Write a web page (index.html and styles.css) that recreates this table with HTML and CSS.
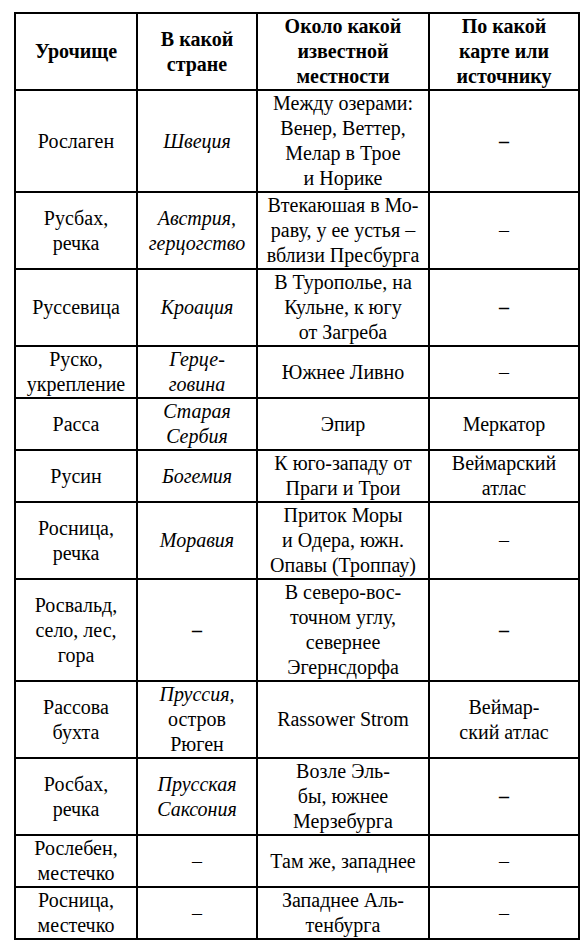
FILE: index.html
```html
<!DOCTYPE html>
<html lang="ru">
<head>
<meta charset="utf-8">
<title>Урочища</title>
<link rel="stylesheet" href="styles.css">
</head>
<body>
<table class="places">
  <colgroup>
    <col class="c-name">
    <col class="c-country">
    <col class="c-area">
    <col class="c-source">
  </colgroup>
  <thead>
    <tr>
      <th>Урочище</th>
      <th>В какой<br>стране</th>
      <th>Около какой<br>известной<br>местности</th>
      <th>По какой<br>карте или<br>источнику</th>
    </tr>
  </thead>
  <tbody>
    <tr>
      <td>Рослаген</td>
      <td class="it">Швеция</td>
      <td>Между озерами:<br>Венер, Веттер,<br>Мелар в Трое<br>и Норике</td>
      <td class="dash-b">–</td>
    </tr>
    <tr>
      <td>Русбах,<br>речка</td>
      <td class="it">Австрия,<br>герцогство</td>
      <td>Втекаюшая в Мо-<br>раву, у ее устья –<br>вблизи Пресбурга</td>
      <td>–</td>
    </tr>
    <tr>
      <td>Руссевица</td>
      <td class="it">Кроация</td>
      <td>В Турополье, на<br>Кульне, к югу<br>от Загреба</td>
      <td class="dash-b">–</td>
    </tr>
    <tr>
      <td>Руско,<br>укрепление</td>
      <td class="it">Герце-<br>говина</td>
      <td>Южнее Ливно</td>
      <td>–</td>
    </tr>
    <tr>
      <td>Расса</td>
      <td class="it">Старая<br>Сербия</td>
      <td>Эпир</td>
      <td>Меркатор</td>
    </tr>
    <tr>
      <td>Русин</td>
      <td class="it">Богемия</td>
      <td>К юго-западу от<br>Праги и Трои</td>
      <td>Веймарский<br>атлас</td>
    </tr>
    <tr>
      <td>Росница,<br>речка</td>
      <td class="it">Моравия</td>
      <td>Приток Моры<br>и Одера, южн.<br>Опавы (Троппау)</td>
      <td>–</td>
    </tr>
    <tr>
      <td>Росвальд,<br>село, лес,<br>гора</td>
      <td class="dash-b">–</td>
      <td>В северо-вос-<br>точном углу,<br>севернее<br>Эгернсдорфа</td>
      <td class="dash-b">–</td>
    </tr>
    <tr>
      <td>Рассова<br>бухта</td>
      <td><i>Пруссия,</i><br>остров<br>Рюген</td>
      <td>Rassower Strom</td>
      <td>Веймар-<br>ский атлас</td>
    </tr>
    <tr>
      <td>Росбах,<br>речка</td>
      <td class="it">Прусская<br>Саксония</td>
      <td>Возле Эль-<br>бы, южнее<br>Мерзебурга</td>
      <td class="dash-b">–</td>
    </tr>
    <tr>
      <td>Рослебен,<br>местечко</td>
      <td>–</td>
      <td>Там же, западнее</td>
      <td>–</td>
    </tr>
    <tr>
      <td>Росница,<br>местечко</td>
      <td>–</td>
      <td>Западнее Аль-<br>тенбурга</td>
      <td>–</td>
    </tr>
  </tbody>
</table>
</body>
</html>
```

FILE: styles.css
```css
html, body {
  margin: 0;
  padding: 0;
  background: #ffffff;
}

body {
  font-family: "Liberation Serif", "Times New Roman", serif;
  font-size: 20px;
  line-height: 25px;
  color: #000000;
}

.places {
  margin: 12px 0 0 14px;
  border-collapse: collapse;
  table-layout: fixed;
  width: 564px;
  border: 2px solid #000000;
}

.c-name { width: 122px; }
.c-country { width: 120px; }
.c-area { width: 172px; }
.c-source { width: 150px; }

.places th,
.places td {
  border: 2px solid #000000;
  padding: 0 2px;
  text-align: center;
  vertical-align: middle;
  white-space: nowrap;
}

.places th {
  font-weight: bold;
}

.it {
  font-style: italic;
}

.dash-b {
  font-weight: bold;
}
```
